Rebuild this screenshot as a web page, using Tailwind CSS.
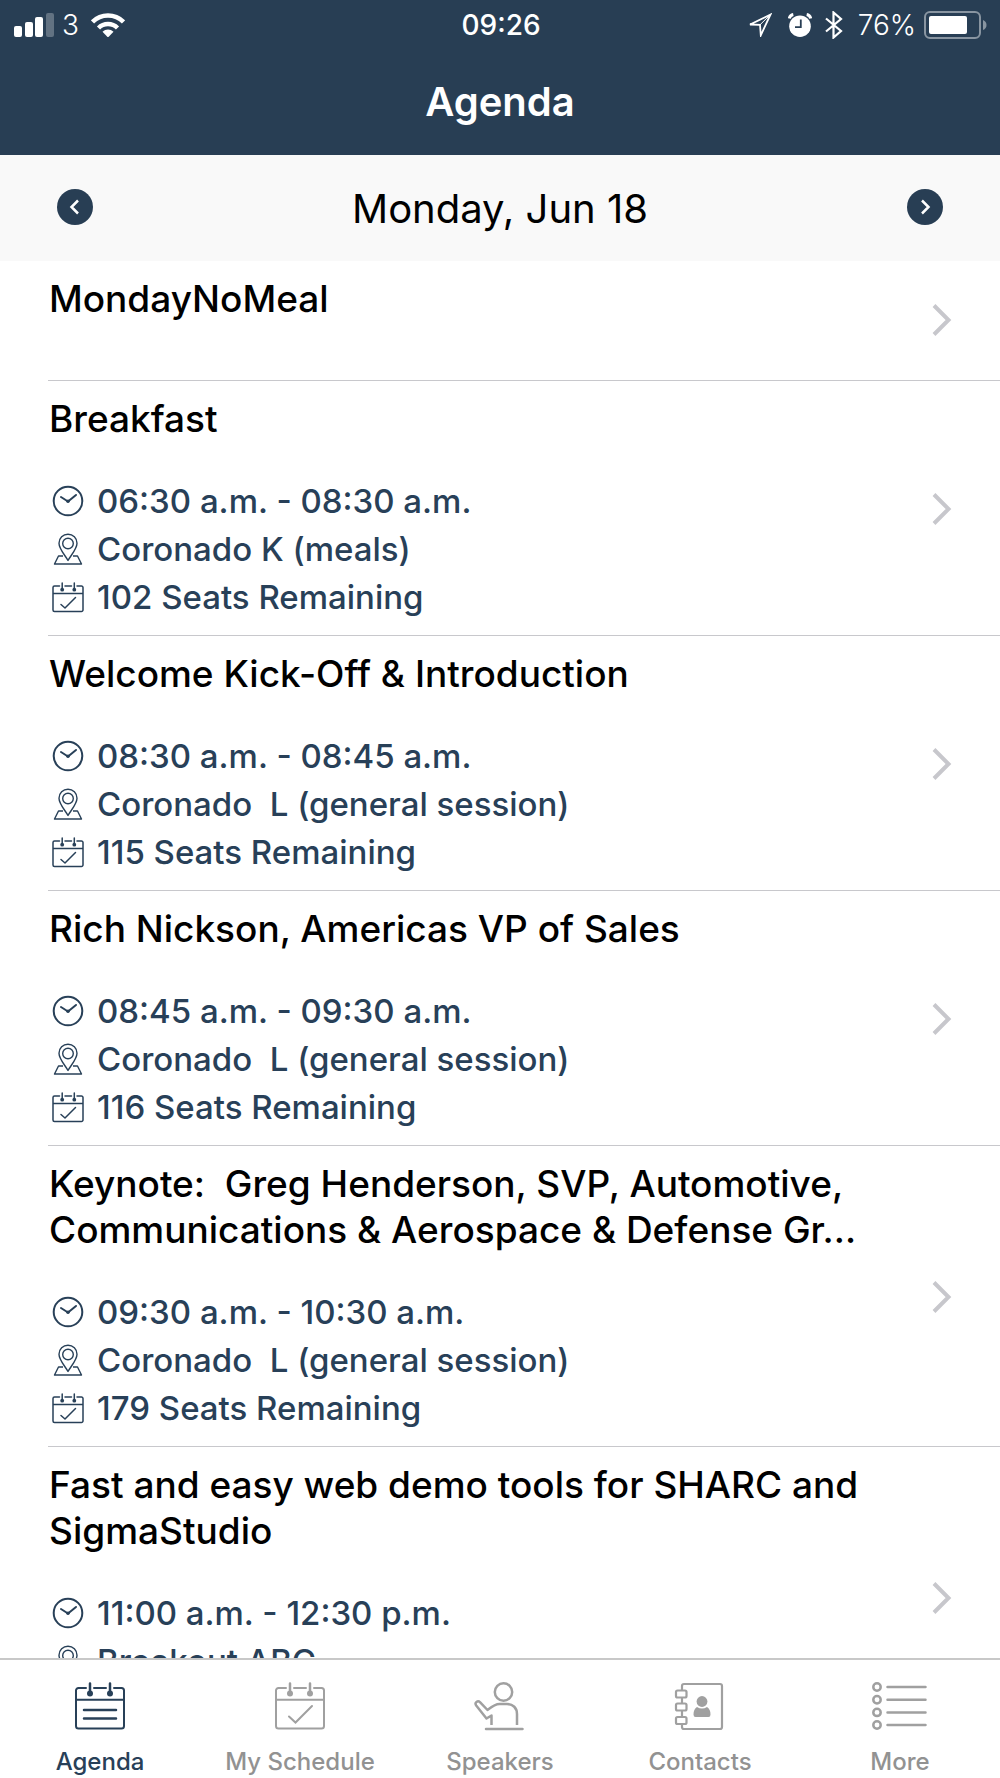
<!DOCTYPE html>
<html lang="en">
<head>
    <meta charset="UTF-8">
    <meta name="viewport" content="width=device-width, initial-scale=1.0">
    <title>Agenda</title>
    <script src="https://cdn.jsdelivr.net/npm/@tailwindcss/browser@4"></script>
</head>
<body class="bg-white font-['Inter','Liberation_Sans',sans-serif]">
    <!-- Shared icons -->
    <svg class="hidden">
        <symbol id="clock" viewBox="0 0 32 32">
            <g fill="none" stroke="currentColor" stroke-width="2" stroke-linecap="round" stroke-linejoin="round">
                <circle cx="16" cy="16" r="14.3"/>
                <path d="M9 12l7 4.5 8-6.5"/>
            </g>
            <circle cx="16" cy="16.3" r="1.8" fill="currentColor"/>
        </symbol>
        <symbol id="pin" viewBox="0 0 32 32">
            <g fill="none" stroke="currentColor" stroke-width="1.4" stroke-linejoin="round">
                <path d="M16 27.5C13 22 7 16 7 10.2a9 9 0 0 1 18 0C25 16 19 22 16 27.5z"/>
                <circle cx="16" cy="10.5" r="5.3"/>
                <path d="M11 23H6.5L2.5 31h27l-4-8H21"/>
            </g>
        </symbol>
        <symbol id="seats" viewBox="0 0 32 32">
            <g fill="none" stroke="currentColor" stroke-width="1.5" stroke-linecap="round" stroke-linejoin="round">
                <path d="M7.5 5H2.5A1.5 1.5 0 0 0 1 6.5V29a1.5 1.5 0 0 0 1.5 1.5h27A1.5 1.5 0 0 0 31 29V6.5A1.5 1.5 0 0 0 29.5 5H25M13 5h6.5M1 12.5h30M9 23.5l4 3.5 10.5-10.5"/>
                <path d="M10.2 2v6M22.3 2v6"/>
            </g>
            <circle cx="10.2" cy="8.7" r="1.9" fill="currentColor"/>
            <circle cx="22.3" cy="8.7" r="1.9" fill="currentColor"/>
        </symbol>
        <symbol id="calendar" viewBox="0 0 52 50">
            <g fill="none" stroke="currentColor" stroke-width="2" stroke-linecap="round" stroke-linejoin="round">
                <path d="M12 7H4.5A2.5 2.5 0 0 0 2 9.5V45a2.5 2.5 0 0 0 2.5 2.5h43A2.5 2.5 0 0 0 50 45V9.5A2.5 2.5 0 0 0 47.5 7H40M20 7h12M2 18.7h48"/>
                <path stroke-width="2.5" d="M16 2.5V12M36 2.5V12"/>
            </g>
            <circle cx="16" cy="12.5" r="3" fill="currentColor"/>
            <circle cx="36" cy="12.5" r="3" fill="currentColor"/>
        </symbol>
        <symbol id="chevron" viewBox="0 0 20 32">
            <path d="M2 1.5L16.5 16 2 30.5" fill="none" stroke="currentColor" stroke-width="4"/>
        </symbol>
    </svg>

    <div class="h-screen flex flex-col">
        <!-- Header -->
        <header class="bg-[#283e54] text-white">
            <div class="grid grid-cols-3 items-center h-[50px] pl-3.5 pr-3">
                <div class="flex items-center">
                    <svg class="w-10 h-6" viewBox="0 0 40 24" fill="white" aria-hidden="true">
                        <rect x="0" y="13" width="8" height="11" rx="2"/>
                        <rect x="11" y="9" width="8" height="15" rx="2"/>
                        <rect x="21" y="4" width="8" height="20" rx="2"/>
                        <rect x="32" y="0" width="8" height="24" rx="2" opacity=".27"/>
                    </svg>
                    <span class="ml-2 text-[28px] font-light">3</span>
                    <svg class="ml-3 w-[34px] h-6" viewBox="0 0 34 24" aria-hidden="true">
                        <g fill="none" stroke="white" stroke-width="4.5">
                            <path d="M1.5 9a22 22 0 0 1 31 0"/>
                            <path d="M7.5 15a13.5 13.5 0 0 1 19 0"/>
                        </g>
                        <path d="M17 24.5l-5.5-5.7a8 8 0 0 1 11 0z" fill="white"/>
                    </svg>
                </div>
                <span class="text-center text-[28px] font-medium">09:26</span>
                <div class="flex items-center justify-end">
                    <svg class="w-6 h-6" viewBox="0 0 24 24" aria-hidden="true">
                        <path d="M22.5 1.5L2 11.5l10 .3.8 10.5z" fill="none" stroke="white" stroke-width="1.8"/>
                        <path d="M22 2L12 11.8" stroke="white" stroke-width="1"/>
                    </svg>
                    <svg class="ml-4 w-6 h-6" viewBox="0 0 24 24" aria-hidden="true">
                        <circle cx="12" cy="13.2" r="10.8" fill="white"/>
                        <path d="M1.3 5.5a5 5 0 0 1 4-4M22.7 5.5a5 5 0 0 0-4-4" stroke="white" stroke-width="3" fill="none"/>
                        <path d="M12.8 6.5v7.7H7" fill="none" stroke="#283e54" stroke-width="1.8"/>
                    </svg>
                    <svg class="ml-3 w-5 h-7" viewBox="0 0 20 28" aria-hidden="true">
                        <path d="M2 7.5L17 20l-7.5 6.5v-25L17 8 2 20.5" fill="none" stroke="white" stroke-width="2.2"/>
                    </svg>
                    <span class="ml-3.5 text-[28px] font-light">76%</span>
                    <svg class="ml-2 w-16 h-7" viewBox="0 0 64 28" aria-hidden="true">
                        <rect x="1" y="1" width="55" height="26" rx="5" fill="none" stroke="white" stroke-opacity=".45" stroke-width="2"/>
                        <rect x="5" y="5" width="38" height="18" rx="2" fill="white"/>
                        <path d="M59 9q3.5 1.5 3.5 5T59 19z" fill="white" opacity=".45"/>
                    </svg>
                </div>
            </div>
            <h1 class="h-[105px] pt-7 text-center text-[40px] leading-[48px] font-semibold">Agenda</h1>
        </header>

        <!-- Day switcher -->
        <div class="flex items-center justify-between h-[106px] px-[57px] pb-0.5 bg-[#f9f9f9]">
            <button class="w-9 h-9 rounded-full bg-[#283e54]" aria-label="Previous day">
                <svg class="w-9 h-9" viewBox="0 0 36 36"><path d="M21 11.5L14.5 18l6.5 6.5" fill="none" stroke="white" stroke-width="2.5"/></svg>
            </button>
            <h2 class="text-[40px] leading-[48px] pt-1">Monday, Jun 18</h2>
            <button class="w-9 h-9 rounded-full bg-[#283e54]" aria-label="Next day">
                <svg class="w-9 h-9" viewBox="0 0 36 36"><path d="M15 11.5l6.5 6.5-6.5 6.5" fill="none" stroke="white" stroke-width="2.5"/></svg>
            </button>
        </div>

        <!-- Sessions -->
        <main class="flex-1 min-h-0 overflow-y-auto [scrollbar-width:none] pl-12">
            <a href="#" class="flex items-center justify-between min-h-[120px] pt-[15px] pb-4 pr-12 border-b border-[#c8c8cc]">
                <div class="self-start">
                    <h3 class="pl-px text-[37px] leading-[46px] font-medium text-black">MondayNoMeal</h3>
                </div>
                <svg class="shrink-0 w-5 h-8 text-[#c7c7cc]"><use href="#chevron"/></svg>
            </a>
            <a href="#" class="flex items-center justify-between pt-[15px] pb-3.5 pr-12 border-b border-[#c8c8cc]">
                <div>
                    <h3 class="pl-px text-[37px] leading-[46px] font-medium text-black">Breakfast</h3>
                    <div class="mt-[35px] text-[33px] leading-[48px] font-medium text-[#284058]">
                        <p class="flex items-center gap-[13px] pl-1"><svg class="w-8 h-8"><use href="#clock"/></svg>06:30 a.m. - 08:30 a.m.</p>
                        <p class="flex items-center gap-[13px] pl-1"><svg class="w-8 h-8"><use href="#pin"/></svg>Coronado K (meals)</p>
                        <p class="flex items-center gap-[13px] pl-1"><svg class="w-8 h-8"><use href="#seats"/></svg>102 Seats Remaining</p>
                    </div>
                </div>
                <svg class="shrink-0 w-5 h-8 text-[#c7c7cc]"><use href="#chevron"/></svg>
            </a>
            <a href="#" class="flex items-center justify-between pt-[15px] pb-3.5 pr-12 border-b border-[#c8c8cc]">
                <div>
                    <h3 class="pl-px text-[37px] leading-[46px] font-medium text-black">Welcome Kick-Off &amp; Introduction</h3>
                    <div class="mt-[35px] text-[33px] leading-[48px] font-medium text-[#284058]">
                        <p class="flex items-center gap-[13px] pl-1"><svg class="w-8 h-8"><use href="#clock"/></svg>08:30 a.m. - 08:45 a.m.</p>
                        <p class="flex items-center gap-[13px] pl-1 whitespace-pre"><svg class="w-8 h-8"><use href="#pin"/></svg>Coronado  L (general session)</p>
                        <p class="flex items-center gap-[13px] pl-1"><svg class="w-8 h-8"><use href="#seats"/></svg>115 Seats Remaining</p>
                    </div>
                </div>
                <svg class="shrink-0 w-5 h-8 text-[#c7c7cc]"><use href="#chevron"/></svg>
            </a>
            <a href="#" class="flex items-center justify-between pt-[15px] pb-3.5 pr-12 border-b border-[#c8c8cc]">
                <div>
                    <h3 class="pl-px text-[37px] leading-[46px] font-medium text-black">Rich Nickson, Americas VP of Sales</h3>
                    <div class="mt-[35px] text-[33px] leading-[48px] font-medium text-[#284058]">
                        <p class="flex items-center gap-[13px] pl-1"><svg class="w-8 h-8"><use href="#clock"/></svg>08:45 a.m. - 09:30 a.m.</p>
                        <p class="flex items-center gap-[13px] pl-1 whitespace-pre"><svg class="w-8 h-8"><use href="#pin"/></svg>Coronado  L (general session)</p>
                        <p class="flex items-center gap-[13px] pl-1"><svg class="w-8 h-8"><use href="#seats"/></svg>116 Seats Remaining</p>
                    </div>
                </div>
                <svg class="shrink-0 w-5 h-8 text-[#c7c7cc]"><use href="#chevron"/></svg>
            </a>
            <a href="#" class="flex items-center justify-between pt-[15px] pb-3.5 pr-12 border-b border-[#c8c8cc]">
                <div>
                    <h3 class="pl-px text-[37px] leading-[46px] font-medium text-black whitespace-pre-wrap">Keynote:  Greg Henderson, SVP, Automotive,<br>Communications &amp; Aerospace &amp; Defense Gr…</h3>
                    <div class="mt-[35px] text-[33px] leading-[48px] font-medium text-[#284058]">
                        <p class="flex items-center gap-[13px] pl-1"><svg class="w-8 h-8"><use href="#clock"/></svg>09:30 a.m. - 10:30 a.m.</p>
                        <p class="flex items-center gap-[13px] pl-1 whitespace-pre"><svg class="w-8 h-8"><use href="#pin"/></svg>Coronado  L (general session)</p>
                        <p class="flex items-center gap-[13px] pl-1"><svg class="w-8 h-8"><use href="#seats"/></svg>179 Seats Remaining</p>
                    </div>
                </div>
                <svg class="shrink-0 w-5 h-8 text-[#c7c7cc]"><use href="#chevron"/></svg>
            </a>
            <a href="#" class="flex items-center justify-between pt-[15px] pb-3.5 pr-12 border-b border-[#c8c8cc]">
                <div>
                    <h3 class="pl-px text-[37px] leading-[46px] font-medium text-black">Fast and easy web demo tools for SHARC and<br>SigmaStudio</h3>
                    <div class="mt-[35px] pb-12 text-[33px] leading-[48px] font-medium text-[#284058]">
                        <p class="flex items-center gap-[13px] pl-1"><svg class="w-8 h-8"><use href="#clock"/></svg>11:00 a.m. - 12:30 p.m.</p>
                        <p class="flex items-center gap-[13px] pl-1"><svg class="w-8 h-8"><use href="#pin"/></svg>Breakout ABC</p>
                    </div>
                </div>
                <svg class="shrink-0 w-5 h-8 text-[#c7c7cc]"><use href="#chevron"/></svg>
            </a>
        </main>

        <!-- Tab bar -->
        <nav class="grid grid-cols-5 h-[120px] pt-[21px] border-t-2 border-[#c8c8c8] bg-white text-2xl font-medium text-[#929292]">
            <a href="#" class="flex flex-col items-center gap-[15px] text-[#284058]" aria-current="page">
                <svg class="w-[52px] h-[50px]" viewBox="0 0 52 50">
                    <use href="#calendar"/>
                    <path d="M10 29h32M10 37.5h32" stroke="currentColor" stroke-width="2.5" stroke-linecap="round"/>
                </svg>
                Agenda
            </a>
            <a href="#" class="flex flex-col items-center gap-[15px]">
                <svg class="w-[52px] h-[50px] text-[#a0a0a0]" viewBox="0 0 52 50">
                    <use href="#calendar"/>
                    <path d="M15 35.5l6.5 6L38 25" fill="none" stroke="currentColor" stroke-width="2" stroke-linecap="round"/>
                </svg>
                My Schedule
            </a>
            <a href="#" class="flex flex-col items-center gap-[15px]">
                <svg class="w-[52px] h-[50px] text-[#a0a0a0]" viewBox="0 0 52 50" fill="none" stroke="currentColor" stroke-width="2.5" stroke-linejoin="round">
                    <circle cx="29.5" cy="11" r="8.7"/>
                    <path d="M17.5 44V34.5l-5 3L2.2 24.5c-2-3 1.5-5.5 4-3.2L13.5 29c4.5-3.5 7.5-6 12-6H33c6 0 10 4 10 10v11"/>
                    <path d="M12 48h36.5" stroke-linecap="round"/>
                </svg>
                Speakers
            </a>
            <a href="#" class="flex flex-col items-center gap-[15px]">
                <svg class="w-[52px] h-[50px] text-[#a0a0a0]" viewBox="1 0 52 50" fill="none" stroke="currentColor" stroke-width="2.2" stroke-linejoin="round">
                    <path d="M9 9V5a2 2 0 0 1 2-2h36a2 2 0 0 1 2 2v41a2 2 0 0 1-2 2H11a2 2 0 0 1-2-2v-4M9 17v5M9 30v6"/>
                    <rect x="3" y="9.5" width="10.5" height="7" rx="1.5"/>
                    <rect x="3" y="22.5" width="10.5" height="7" rx="1.5"/>
                    <rect x="3" y="36" width="10.5" height="7" rx="1.5"/>
                    <g fill="currentColor" stroke="none">
                        <circle cx="29" cy="20.5" r="5.4"/>
                        <path d="M24 26q5 3 10 0 3.5 2 3.5 7.5 0 2.5-2 2.5h-13q-2 0-2-2.5Q20.5 28 24 26z"/>
                    </g>
                </svg>
                Contacts
            </a>
            <a href="#" class="flex flex-col items-center gap-[15px]">
                <svg class="w-14 h-[50px] text-[#a0a0a0]" viewBox="0 0 56 50" fill="none" stroke="currentColor" stroke-width="2.5" stroke-linecap="round">
                    <circle cx="5" cy="6" r="3.7"/>
                    <circle cx="5" cy="18.7" r="3.7"/>
                    <circle cx="5" cy="31.4" r="3.7"/>
                    <circle cx="5" cy="44" r="3.7"/>
                    <path d="M15.5 6h38M15.5 18.7h38M15.5 31.4h38M15.5 44h38"/>
                </svg>
                More
            </a>
        </nav>
    </div>
</body>
</html>
